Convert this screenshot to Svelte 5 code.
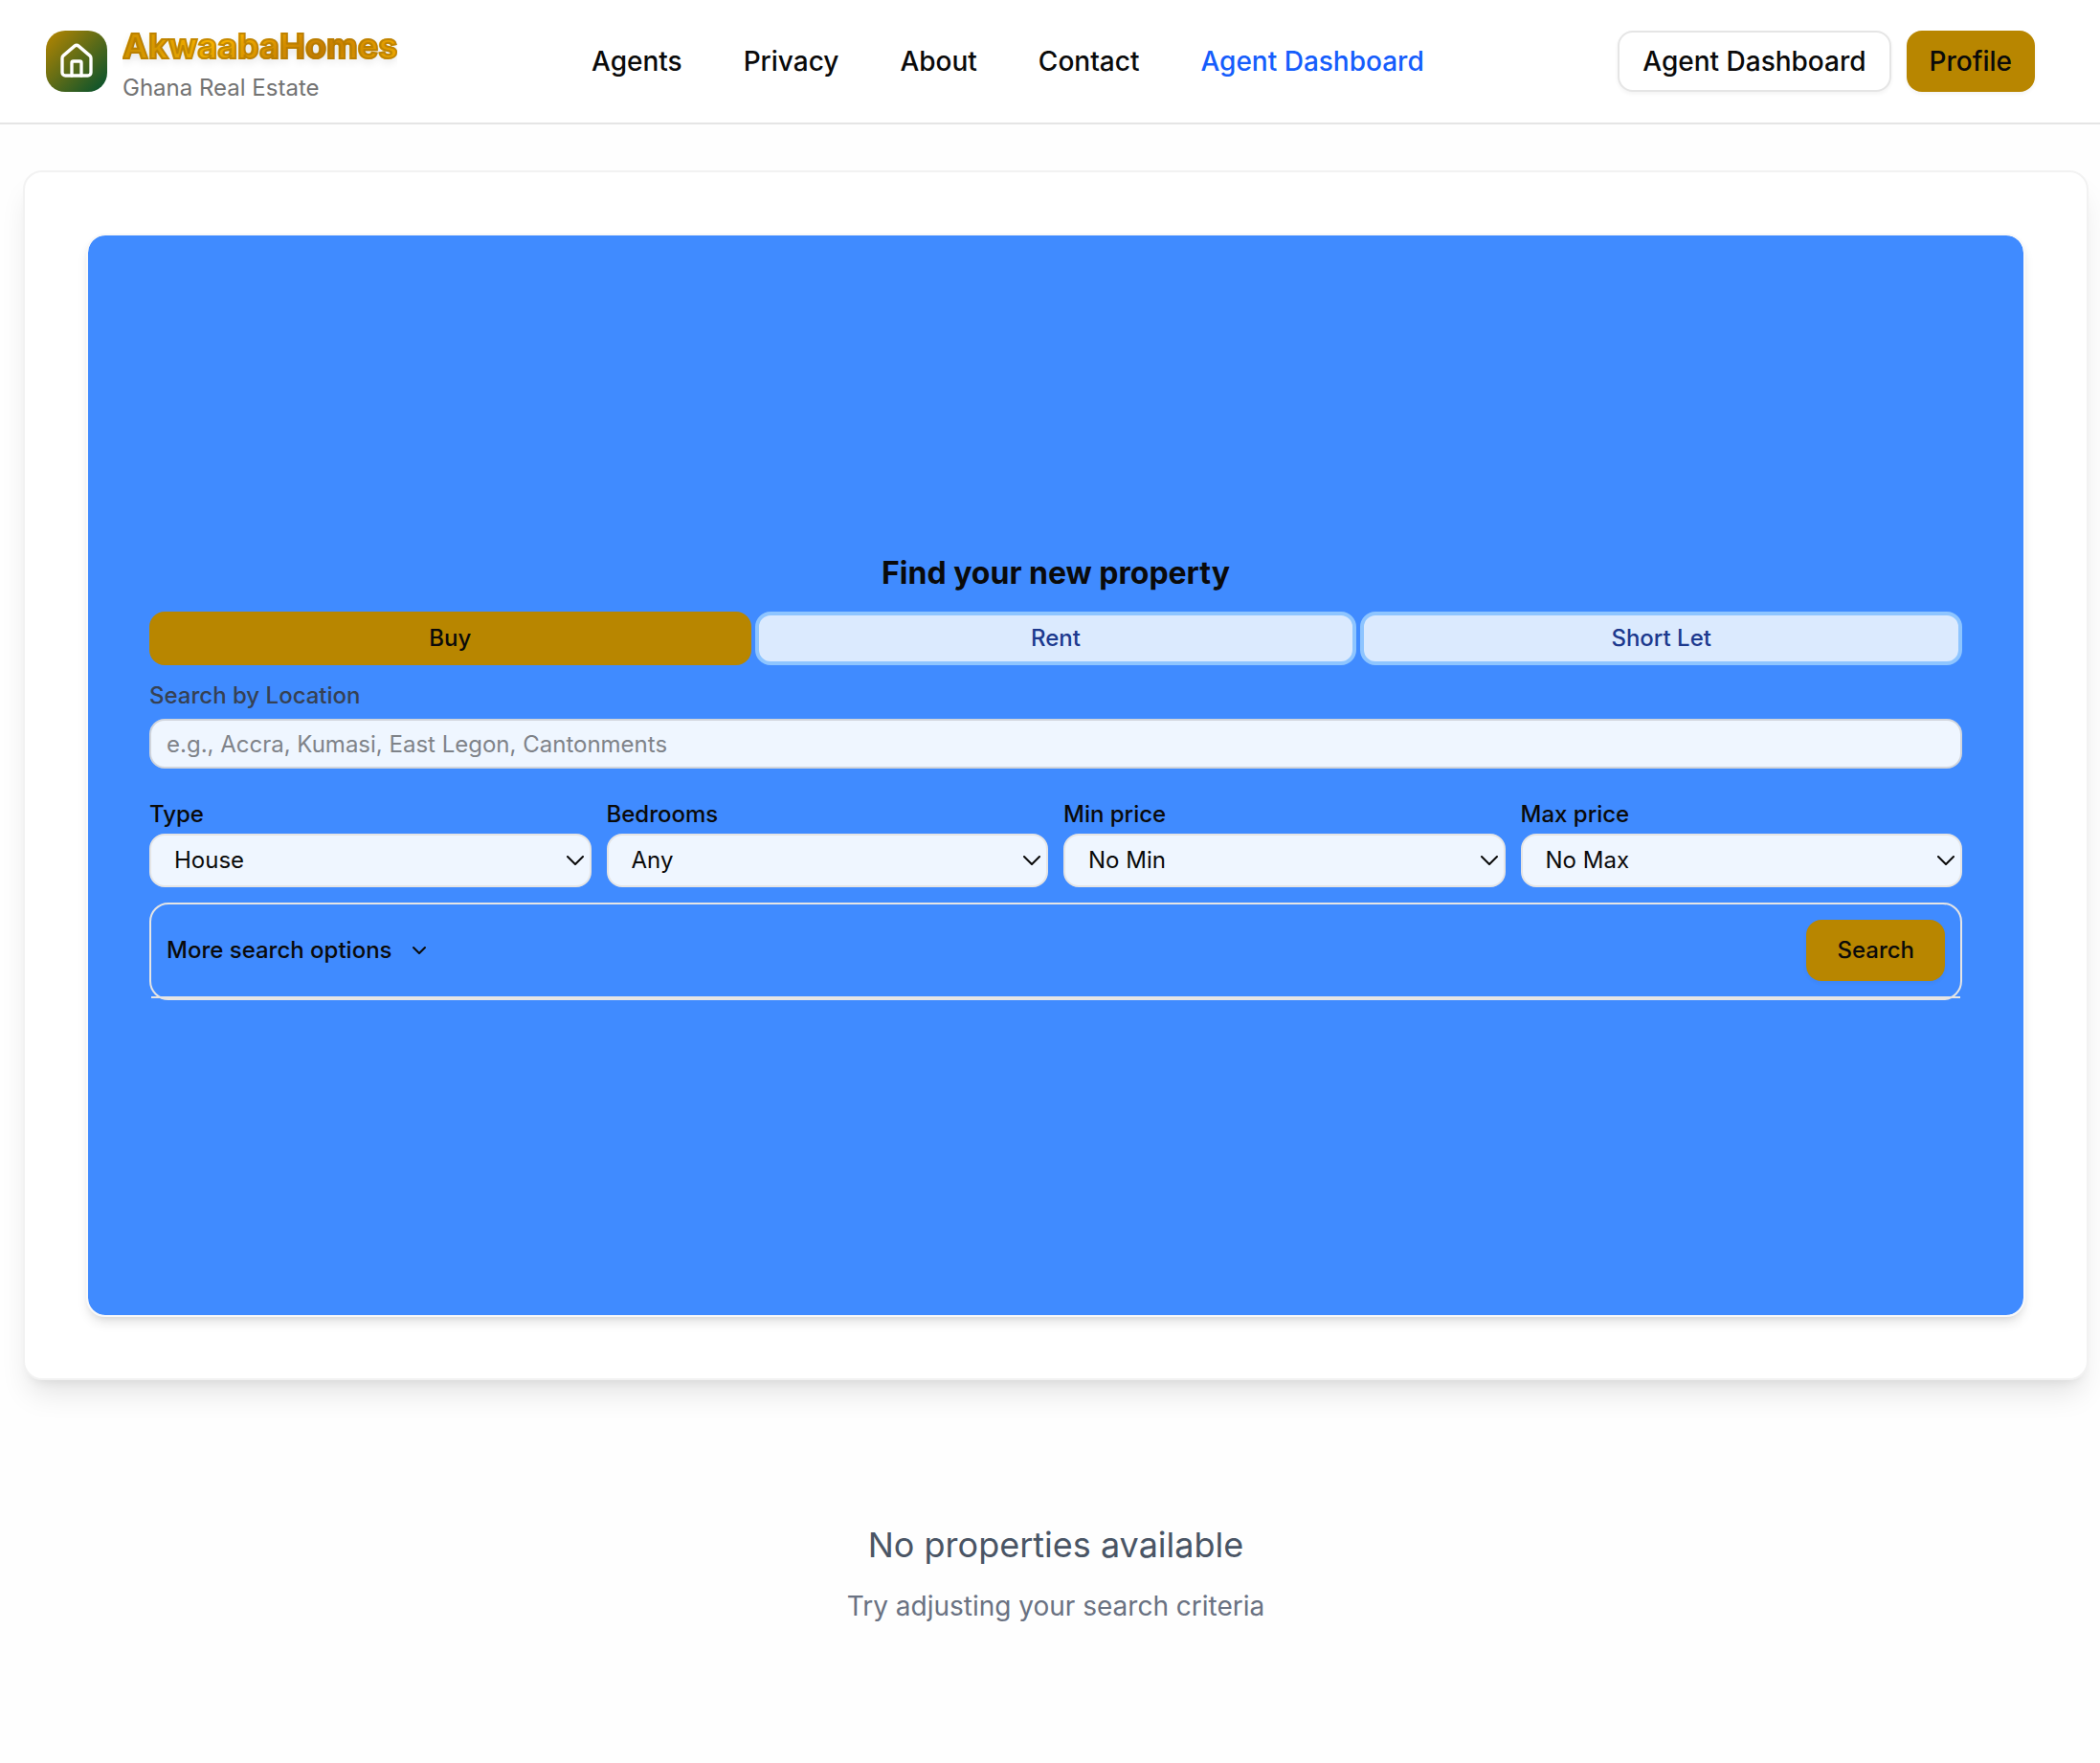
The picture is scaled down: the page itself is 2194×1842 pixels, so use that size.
<script>
  const links = ['Agents', 'Privacy', 'About', 'Contact'];
  const modes = ['Buy', 'Rent', 'Short Let'];
  const filters = [
    { id: 'type', label: 'Type', options: ['House', 'Apartment', 'Land'] },
    { id: 'bedrooms', label: 'Bedrooms', options: ['Any', '1', '2', '3', '4+'] },
    { id: 'min-price', label: 'Min price', options: ['No Min'] },
    { id: 'max-price', label: 'Max price', options: ['No Max'] },
  ];
  let mode = $state('Buy');
</script>

<header>
  <a class="brand" href="/">
    <span class="mark">
      <svg viewBox="0 0 24 24" aria-hidden="true">
        <path d="M15 21v-8a1 1 0 0 0-1-1h-4a1 1 0 0 0-1 1v8" />
        <path d="M3 10a2 2 0 0 1 .709-1.528l7-5.999a2 2 0 0 1 2.582 0l7 5.999A2 2 0 0 1 21 10v9a2 2 0 0 1-2 2H5a2 2 0 0 1-2-2z" />
      </svg>
    </span>
    <span class="names">
      <span class="name">AkwaabaHomes</span>
      <span class="tagline">Ghana Real Estate</span>
    </span>
  </a>
  <nav>
    {#each links as link}
      <a href="/{link.toLowerCase()}">{link}</a>
    {/each}
    <a class="current" href="/dashboard">Agent Dashboard</a>
  </nav>
  <div class="actions">
    <button class="outline" type="button">Agent Dashboard</button>
    <button class="gold" type="button">Profile</button>
  </div>
</header>

<main>
  <section class="card">
    <div class="panel">
      <form onsubmit={(e) => e.preventDefault()}>
        <h1>Find your new property</h1>
        <div class="modes">
          {#each modes as m}
            <button type="button" class:active={mode === m} aria-pressed={mode === m} onclick={() => (mode = m)}>{m}</button>
          {/each}
        </div>
        <div class="location">
          <label for="location">Search by Location</label>
          <input id="location" type="text" placeholder="e.g., Accra, Kumasi, East Legon, Cantonments" />
        </div>
        <div class="filters">
          {#each filters as f}
            <div class="field">
              <label for={f.id}>{f.label}</label>
              <div class="select">
                <select id={f.id}>
                  {#each f.options as o}
                    <option>{o}</option>
                  {/each}
                </select>
                <svg viewBox="0 0 18 10" aria-hidden="true"><path d="M1 1l8 8 8-8" /></svg>
              </div>
            </div>
          {/each}
        </div>
        <div class="more">
          <div class="more-row">
            <button class="toggle" type="button">
              More search options
              <svg viewBox="0 0 24 24" aria-hidden="true"><path d="m6 9 6 6 6-6" /></svg>
            </button>
            <button class="search" type="submit">Search</button>
          </div>
        </div>
      </form>
    </div>
  </section>
  <section class="empty">
    <p class="headline">No properties available</p>
    <p class="hint">Try adjusting your search criteria</p>
  </section>
</main>

<style>
  :global(body) {
    margin: 0;
    background: #fefefe;
    color: #0a0a0a;
    font-family: Inter, "Liberation Sans", sans-serif;
    font-size: 24px;
    line-height: 32px;
  }
  header, header *, main, main * {
    box-sizing: border-box;
  }
  button, input, select {
    font: inherit;
    color: inherit;
    margin: 0;
  }
  button {
    cursor: pointer;
  }
  header {
    display: flex;
    align-items: center;
    justify-content: space-between;
    padding: 20px 68px 20px 48px;
    background: #fff;
    border-bottom: 2px solid #e5e5e5;
  }
  a {
    color: inherit;
    text-decoration: none;
  }
  .brand {
    display: flex;
    align-items: center;
    gap: 16px;
  }
  .mark {
    display: grid;
    place-items: center;
    width: 64px;
    height: 64px;
    border-radius: 20px;
    background: linear-gradient(135deg, #b88600, #00502f);
  }
  .mark svg {
    width: 40px;
    height: 40px;
    fill: none;
    stroke: #fff;
    stroke-width: 2;
    stroke-linecap: round;
    stroke-linejoin: round;
  }
  .names {
    display: flex;
    flex-direction: column;
    gap: 4px;
    padding-top: 4px;
  }
  .name {
    overflow: hidden;
    font-size: 36px;
    line-height: 48px;
    font-weight: 700;
    color: transparent;
    background: linear-gradient(135deg, #d09000, #ffb800 35%, #d08400 70%, #ffb800);
    background-clip: text;
    -webkit-text-stroke: 2px rgba(176, 120, 0, 0.7);
    text-shadow: 0 4px 8px rgba(0, 0, 0, 0.12);
  }
  .tagline {
    color: #737373;
  }
  nav {
    display: flex;
    gap: 64px;
    font-size: 28px;
    line-height: 40px;
    font-weight: 500;
  }
  .current {
    color: #155dfc;
  }
  .actions {
    display: flex;
    gap: 16px;
  }
  .actions button {
    height: 64px;
    padding: 0 24px;
    font-size: 28px;
    font-weight: 500;
    border-radius: 16px;
    box-shadow: 0 2px 4px rgba(0, 0, 0, 0.05);
  }
  .actions .outline {
    background: #fff;
    border: 2px solid #e5e5e5;
  }
  .actions .gold {
    background: #b88600;
    border: 0;
  }
  main {
    padding: 48px 12px 96px 24px;
  }
  .card {
    padding: 64px;
    background: #fff;
    border: 2px solid #f2f2f2;
    border-radius: 20px;
    box-shadow: 0 20px 30px -6px rgba(0, 0, 0, 0.1), 0 8px 12px -8px rgba(0, 0, 0, 0.1);
  }
  .panel {
    display: flex;
    align-items: center;
    min-height: 1132px;
    padding: 64px;
    background: #408bff;
    background-clip: padding-box;
    border: 2px solid #f9f9f9;
    border-radius: 20px;
    box-shadow: 0 8px 12px -2px rgba(0, 0, 0, 0.1), 0 4px 8px -4px rgba(0, 0, 0, 0.1);
  }
  form {
    flex: 1;
    min-width: 0;
  }
  h1 {
    margin: 0 0 16px;
    font-size: 32px;
    line-height: 48px;
    font-weight: 700;
    text-align: center;
  }
  .modes {
    display: grid;
    grid-template-columns: repeat(3, 1fr);
    gap: 4px;
    margin-bottom: 16px;
  }
  .modes button {
    height: 56px;
    padding: 0;
    border: 4px solid #8ec5ff;
    border-radius: 16px;
    background: #dbeafe;
    color: #1c398e;
    font-weight: 500;
  }
  .modes .active {
    border-color: #b88600;
    background: #b88600;
    color: #0a0a0a;
  }
  label {
    display: block;
    font-weight: 500;
  }
  .location {
    margin-bottom: 32px;
  }
  .location label {
    margin-bottom: 8px;
    color: #364153;
  }
  input {
    display: block;
    width: 100%;
    height: 52px;
    padding: 0 16px;
    border: 2px solid #d1d5dc;
    border-radius: 16px;
    background: #eff6ff;
  }
  input::placeholder {
    color: #7f8389;
    opacity: 1;
  }
  .filters {
    display: grid;
    grid-template-columns: repeat(4, 1fr);
    gap: 16px;
    margin-bottom: 16px;
  }
  .field label {
    margin-bottom: 4px;
  }
  .select {
    display: grid;
    align-items: center;
  }
  .select > * {
    grid-area: 1 / 1;
  }
  select {
    appearance: none;
    width: 100%;
    height: 56px;
    padding: 0 24px;
    border: 2px solid #e5e5e5;
    border-radius: 16px;
    background: #eff6ff;
  }
  .select svg {
    justify-self: end;
    width: 18px;
    height: 10px;
    margin-right: 8px;
    pointer-events: none;
  }
  .select svg, .toggle svg {
    fill: none;
    stroke: #0a0a0a;
    stroke-width: 2;
    stroke-linecap: round;
    stroke-linejoin: round;
  }
  .more {
    border: 2px solid #e5e5e5;
    border-radius: 20px;
  }
  .more-row {
    display: flex;
    align-items: center;
    justify-content: space-between;
    padding: 16px;
    border-bottom: 2px solid #e5e5e5;
  }
  .toggle {
    display: flex;
    align-items: center;
    gap: 16px;
    padding: 0;
    border: 0;
    background: none;
    font-weight: 500;
  }
  .toggle svg {
    width: 24px;
    height: 24px;
  }
  .search {
    height: 64px;
    padding: 0 32px;
    border: 0;
    border-radius: 16px;
    background: #b88600;
    font-weight: 500;
    box-shadow: 0 2px 4px rgba(0, 0, 0, 0.05);
  }
  .empty {
    padding-top: 144px;
    text-align: center;
  }
  .empty p {
    margin: 0;
  }
  .empty .headline {
    margin-bottom: 16px;
    color: #4a5565;
    font-size: 36px;
    line-height: 56px;
  }
  .empty .hint {
    color: #6a7282;
    font-size: 28px;
    line-height: 40px;
  }
</style>
